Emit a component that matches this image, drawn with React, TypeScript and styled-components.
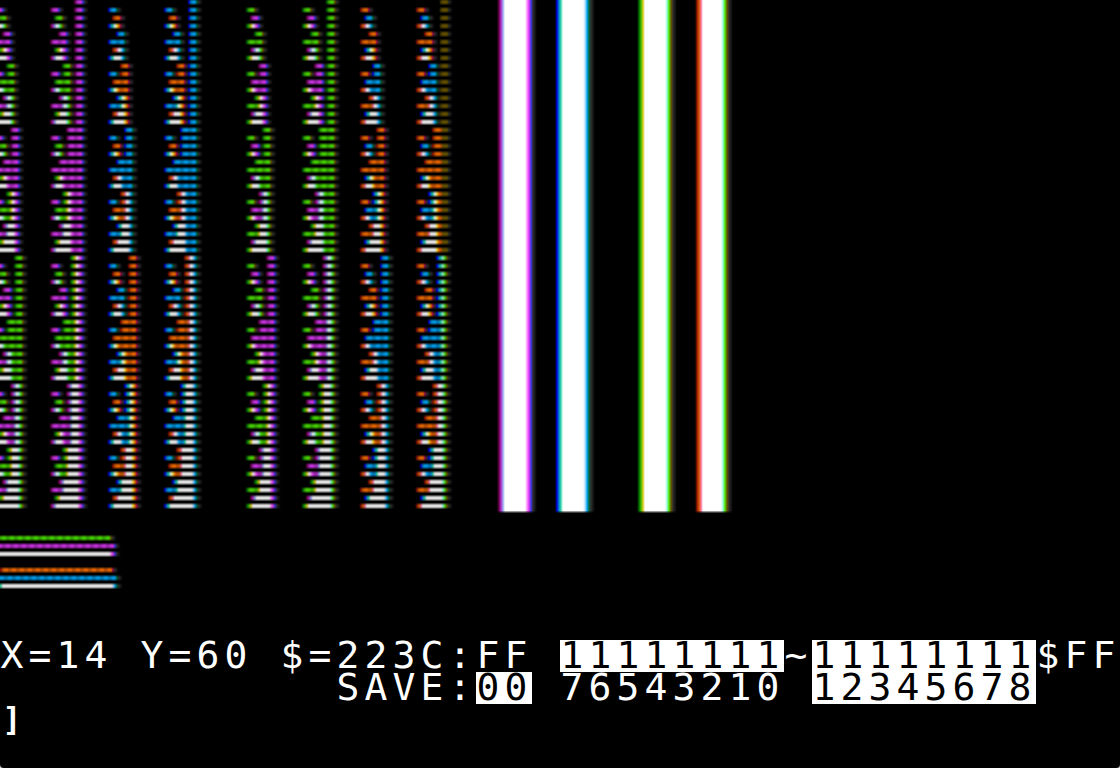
import React from 'react';
import styled, { createGlobalStyle } from 'styled-components';

const GlobalStyle = createGlobalStyle`
  body { margin: 0; background: #c4c4c4; }
`;

/* ---------- artifact colour decoder: 560 samples per scan line ---------- */

type RGB = [number, number, number];
type Bytes = Record<number, number>;

const SAMPLES = 560;
const LEAD_IN = 3;
const BLACK: RGB = [0, 0, 0];
const WHITE: RGB = [255, 255, 255];

/* Colours by the four-sample window, keyed by the phases that are lit. */
const RISING: Record<number, RGB> = {
  1: [110, 0, 80], 2: [0, 0, 230], 4: [0, 105, 0], 8: [150, 20, 0],
  7: [150, 170, 240], 14: [60, 220, 170], 13: [220, 200, 20], 11: [255, 110, 150],
};
const FALLING: Record<number, RGB> = {
  1: [150, 10, 80], 2: [60, 55, 235], 4: [0, 100, 60], 8: [105, 85, 0],
  7: [190, 225, 255], 14: [150, 255, 220], 13: [255, 235, 60], 11: [255, 150, 255],
};
const STEADY: Record<number, RGB> = {
  0: BLACK, 1: [120, 0, 80], 2: [40, 40, 210], 4: [0, 95, 30], 8: [110, 90, 0],
  3: [220, 55, 245], 6: [0, 170, 255], 12: [75, 230, 0], 9: [255, 110, 0],
  5: [128, 128, 128], 10: [128, 128, 128],
  7: [170, 195, 250], 14: [110, 235, 200], 13: [240, 215, 40], 11: [255, 120, 190],
  15: WHITE,
};

const scale = (c: RGB, f: number): RGB => [c[0] * f, c[1] * f, c[2] * f];
const mix = (a: RGB, b: RGB, t: number): RGB => [
  a[0] + (b[0] - a[0]) * t, a[1] + (b[1] - a[1]) * t, a[2] + (b[2] - a[2]) * t,
];

function toSignal(bytes: Bytes): number[] {
  const signal = new Array<number>(SAMPLES + 8).fill(0);
  for (const key of Object.keys(bytes)) {
    const col = Number(key);
    const byte = bytes[col];
    const shift = byte & 0x80 ? 1 : 0;
    const end = (col + 1) * 14 + ((bytes[col + 1] ?? 0) & 0x80 ? 1 : 0);
    for (let bit = 0; bit < 7; bit++) {
      if (!(byte & (1 << bit))) continue;
      const at = col * 14 + bit * 2 + shift;
      signal[at] = 1;
      if (at + 1 < end) signal[at + 1] = 1;
    }
  }
  return signal;
}

function decode(signal: number[]): RGB[] {
  const out: RGB[] = [];
  let dark = 9;
  for (let t = 0; t < SAMPLES + LEAD_IN; t++) {
    let phases = 0;
    let shape = 0;
    for (let k = 3; k >= 0; k--) {
      const on = signal[t - k] ? 1 : 0;
      shape = (shape << 1) | on;
      if (on) phases |= 1 << ((t - k + 4) % 4);
    }
    dark = phases ? 0 : dark + 1;
    let colour = STEADY[phases];
    if (shape === 1) colour = signal[t + 1] ? RISING[phases] : scale(colour, 0.7);
    else if (shape === 7) colour = RISING[phases];
    else if (shape === 8 || shape === 14) colour = FALLING[phases];
    else if (shape === 3) colour = scale(colour, 0.82);
    else if (shape === 9) colour = scale(colour, 0.78);
    else if (dark === 1) colour = [46, 46, 46];
    else if (dark === 2) colour = [22, 22, 22];
    out.push(colour);
  }
  return out.slice(LEAD_IN);
}

interface Run { x: number; w: number; fill: string }

function toRuns(bytes: Bytes): Run[] {
  const runs: Run[] = [];
  const samples = decode(toSignal(bytes));
  for (let x = 0; x < SAMPLES * 2; x++) {
    const s = x >> 1;
    const near = samples[x % 2 ? s + 1 : s - 1] ?? samples[s];
    const [r, g, b] = mix(samples[s], near, 0.25).map(Math.round);
    if (r + g + b < 12) continue;
    const fill = `rgb(${r},${g},${b})`;
    const last = runs[runs.length - 1];
    if (last && last.fill === fill && last.x + last.w === x) last.w += 1;
    else runs.push({ x, w: 1, fill });
  }
  return runs;
}

const Strip = ({ runs, y, height }: { runs: Run[]; y: number; height: number }) => (
  <>
    {runs.map((r) => (
      <rect key={r.x} x={r.x} y={y} width={r.w} height={height} fill={r.fill} />
    ))}
  </>
);

/* ---------- what the hi-res page holds ---------- */

const COUNTER_ROWS = Array.from({ length: 64 }, (_, n) => ({
  y: n * 8,
  runs: toRuns({
    0: n, 2: n | 0x40, 4: n | 0x80, 5: 0x80, 6: n | 0xc0, 7: 0x80,
    9: n, 11: n | 0x40, 13: n | 0x80, 15: n | 0xc0,
  }),
}));

const COLOUR_LINES = [
  [0x2a, 0x55, 0x2a, 0x55, 0x00],
  [0x55, 0x2a, 0x55, 0x2a, 0x01],
  [0x7f, 0x7f, 0x7f, 0x7f, 0x01],
  [],
  [0xaa, 0xd5, 0xaa, 0xd5, 0x80],
  [0xd5, 0xaa, 0xd5, 0xaa, 0x81],
  [0xff, 0xff, 0xff, 0xff, 0x81],
].map((bytes, n) => ({ y: 536 + n * 8, runs: toRuns({ ...bytes }) }));

const BARS = toRuns({ 18: 0x7f, 20: 0xff, 21: 0x80, 23: 0x7f, 25: 0xff });

const Display = styled.main`
  display: flex;
  flex-direction: column;
  min-height: 100vh;
  background: #000;
  border-radius: 0 0 4px 4px;
`;

const HiRes = styled.svg`
  display: block;
  width: 100%;
  height: auto;
`;

const Console = styled.section`
  display: flex;
  flex-direction: column;
`;

const Line = styled.div`
  display: grid;
  grid-template-columns: repeat(40, 1fr);
  height: 32px;
  font: 38px/30px 'DejaVu Sans Mono', 'Liberation Mono', monospace;
  color: #fff;
  white-space: pre;
`;

const Cell = styled.span<{ $inverse?: boolean; $prompt?: boolean }>`
  height: 32px;
  padding-right: 4px;
  text-align: center;
  font-size: ${(p) => (p.$prompt ? '32px' : '38px')};
  font-weight: ${(p) => (p.$prompt ? 700 : 400)};
  color: ${(p) => (p.$inverse ? '#000' : '#fff')};
  background: ${(p) => (p.$inverse ? '#fff' : 'transparent')};
`;

interface Span { text: string; inverse?: boolean; prompt?: boolean }

const LINES: Span[][] = [
  [
    { text: 'X=14 Y=60 $=223C:FF ' },
    { text: '11111111', inverse: true },
    { text: '~' },
    { text: '11111111', inverse: true },
    { text: '$FF' },
  ],
  [
    { text: '            SAVE:' },
    { text: '00', inverse: true },
    { text: ' 76543210 ' },
    { text: '12345678', inverse: true },
  ],
  [{ text: ']', prompt: true }],
];

export default function App() {
  return (
    <>
      <GlobalStyle />
      <Display>
        <HiRes viewBox="0 0 1120 640" shapeRendering="crispEdges" role="img" aria-label="Hi-res colour test pattern">
          {[...COUNTER_ROWS, ...COLOUR_LINES].map(({ y, runs }) => (
            <g key={y}>
              <g opacity={0.3}><Strip runs={runs} y={y - 1} height={6} /></g>
              <g opacity={0.5}><Strip runs={runs} y={y} height={4} /></g>
              <g opacity={0.65}><Strip runs={runs} y={y + 1} height={2} /></g>
            </g>
          ))}
          <Strip runs={BARS} y={0} height={511} />
          <g opacity={0.6}><Strip runs={BARS} y={511} height={1} /></g>
          <g opacity={0.25}><Strip runs={BARS} y={512} height={1} /></g>
        </HiRes>
        <Console>
          {LINES.map((spans, row) => (
            <Line key={row}>
              {spans.flatMap((span, s) =>
                [...span.text].map((ch, c) => (
                  <Cell key={`${s}-${c}`} $inverse={span.inverse} $prompt={span.prompt}>{ch}</Cell>
                )),
              )}
            </Line>
          ))}
        </Console>
      </Display>
    </>
  );
}
